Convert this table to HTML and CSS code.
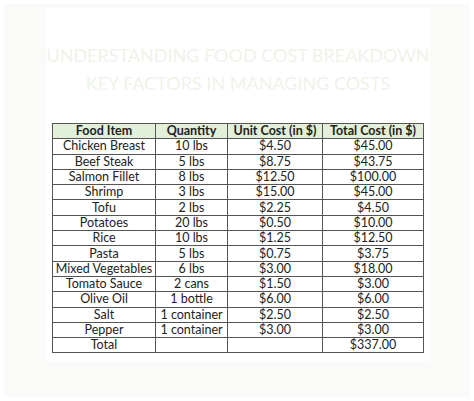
FILE: index.html
```html
<!DOCTYPE html>
<html>
<head>
<meta charset="utf-8">
<link rel="stylesheet" href="styles.css">
</head>
<body>
<div class="page">
  <div class="sheet">
    <h1 class="title">UNDERSTANDING FOOD COST BREAKDOWN<br>KEY FACTORS IN MANAGING COSTS</h1>
    <table class="costs">
      <colgroup>
        <col class="c1"><col class="c2"><col class="c3"><col class="c4">
      </colgroup>
      <thead>
        <tr><th>Food Item</th><th>Quantity</th><th>Unit Cost (in $)</th><th>Total Cost (in $)</th></tr>
      </thead>
      <tbody>
        <tr><td>Chicken Breast</td><td>10 lbs</td><td>$4.50</td><td>$45.00</td></tr>
        <tr><td>Beef Steak</td><td>5 lbs</td><td>$8.75</td><td>$43.75</td></tr>
        <tr><td>Salmon Fillet</td><td>8 lbs</td><td>$12.50</td><td>$100.00</td></tr>
        <tr><td>Shrimp</td><td>3 lbs</td><td>$15.00</td><td>$45.00</td></tr>
        <tr><td>Tofu</td><td>2 lbs</td><td>$2.25</td><td>$4.50</td></tr>
        <tr><td>Potatoes</td><td>20 lbs</td><td>$0.50</td><td>$10.00</td></tr>
        <tr><td>Rice</td><td>10 lbs</td><td>$1.25</td><td>$12.50</td></tr>
        <tr><td>Pasta</td><td>5 lbs</td><td>$0.75</td><td>$3.75</td></tr>
        <tr><td>Mixed Vegetables</td><td>6 lbs</td><td>$3.00</td><td>$18.00</td></tr>
        <tr><td>Tomato Sauce</td><td>2 cans</td><td>$1.50</td><td>$3.00</td></tr>
        <tr><td>Olive Oil</td><td>1 bottle</td><td>$6.00</td><td>$6.00</td></tr>
        <tr><td>Salt</td><td>1 container</td><td>$2.50</td><td>$2.50</td></tr>
        <tr><td>Pepper</td><td>1 container</td><td>$3.00</td><td>$3.00</td></tr>
        <tr><td>Total</td><td></td><td></td><td>$337.00</td></tr>
      </tbody>
    </table>
  </div>
</div>
</body>
</html>
```
FILE: styles.css
```css
html, body {
  margin: 0;
  padding: 0;
}
body {
  background: #ffffff;
  width: 474px;
  height: 401px;
  overflow: hidden;
}
.page {
  background: #fafbf8;
  margin: 4px;
  height: 393px;
  padding-top: 4px;
  box-sizing: border-box;
}
.sheet {
  background: #ffffff;
  margin: 0 40px 0 42px;
  padding: 33px 0 8px 0;
  display: flex;
  flex-direction: column;
  align-items: flex-start;
}
.title {
  margin: 0 -20px 26px -20px;
  align-self: stretch;
  text-align: center;
  white-space: nowrap;
  font-family: "Lato", sans-serif;
  font-weight: 400;
  font-size: 18px;
  line-height: 28px;
  color: #eff3ea;
  letter-spacing: 0;
}
.costs {
  margin-left: 6px;
  border-collapse: collapse;
  font-family: "Lato", sans-serif;
  font-size: 12.5px;
  color: #222;
  table-layout: fixed;
  width: 371px;
}
.c1 { width: 103px; }
.c2 { width: 72px; }
.c3 { width: 95px; }
.c4 { width: 101px; }
.costs th, .costs td {
  border: 1px solid #555;
  text-align: center;
  padding: 0;
  height: 14.3px;
  line-height: 14px;
  white-space: nowrap;
}
.costs th {
  background: #e2efd9;
  font-weight: 700;
}
```
